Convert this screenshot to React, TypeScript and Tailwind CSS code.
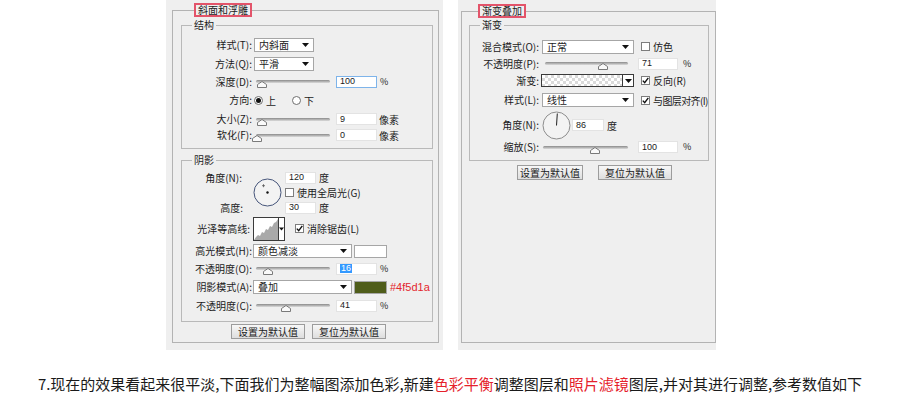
import React from 'react';

const Caret: React.FC<{ w?: number }> = ({ w = 7 }) => (
  <svg width={w} height={4} viewBox="0 0 7 4">
    <path d="M0 0h7L3.5 4z" fill="#111" />
  </svg>
);

const Select: React.FC<{ value: string; className: string }> = ({ value, className }) => (
  <div className={`flex h-[14px] items-center justify-between border border-[#a6a6a6] bg-white pl-[4px] pr-[4px] ${className}`}>
    <span className="leading-none">{value}</span>
    <Caret />
  </div>
);

const Field: React.FC<{ value: string; className?: string; focus?: boolean; picked?: boolean }> = ({
  value,
  className = 'w-[40px]',
  focus,
  picked,
}) => (
  <div
    className={`flex h-[12px] items-center bg-white pl-[3px] font-['Liberation_Sans',sans-serif] text-[9px] leading-none ${
      focus ? 'border border-[#7eb4ea]' : 'border border-[#e3e3e3]'
    } ${className}`}
  >
    {picked ? <span className="bg-[#3399ff] px-[1px] text-white">{value}</span> : value}
  </div>
);

const Slider: React.FC<{ className: string; at: number }> = ({ className, at }) => (
  <div className={`relative h-[3px] rounded-full bg-linear-to-b from-[#8a8a8a] to-[#dcdcdc] ${className}`}>
    <svg className="absolute top-[1px] -ml-[5px]" style={{ left: at }} width="10" height="7" viewBox="0 0 10 7">
      <path d="M.5 6.5V3.5L5 .5l4.5 3v3z" fill="#fafafa" stroke="#7a7a7a" />
    </svg>
  </div>
);

const Check: React.FC<{ on?: boolean }> = ({ on }) => (
  <span className="flex h-[9px] w-[9px] shrink-0 items-center justify-center border border-[#7d7d7d] bg-white">
    {on && (
      <svg width="7" height="7" viewBox="0 0 7 7">
        <path d="M.8 3.6l1.9 2.1L6.3.9" fill="none" stroke="#111" strokeWidth="1.4" />
      </svg>
    )}
  </span>
);

const Radio: React.FC<{ on?: boolean }> = ({ on }) => (
  <span className="flex h-[9px] w-[9px] items-center justify-center rounded-full border border-[#6f6f6f] bg-white">
    {on && <span className="h-[5px] w-[5px] rounded-full bg-[#111]" />}
  </span>
);

const Btn: React.FC<{ children: React.ReactNode; className: string }> = ({ children, className }) => (
  <div className={`flex h-[15px] items-center justify-center border border-[#9c9c9c] bg-linear-to-b from-[#f7f7f7] to-[#dedede] text-[10px] leading-none ${className}`}>
    {children}
  </div>
);

const Label: React.FC<{ children: React.ReactNode; className: string }> = ({ children, className }) => (
  <span className={`shrink-0 text-right leading-none ${className}`}>{children}</span>
);

const Title: React.FC<{ children: React.ReactNode; className: string }> = ({ children, className }) => (
  <legend className={`h-[14px] border-2 border-[#e3546a] px-[2px] text-[10px] leading-[10px] ${className}`}>{children}</legend>
);

const Group: React.FC<{ title: string; children: React.ReactNode; className: string }> = ({ title, children, className }) => (
  <fieldset className={`border border-[#b9b9b9] ${className}`}>
    <legend className="ml-[10px] px-[2px] text-[10px] leading-[12px]">{title}</legend>
    {children}
  </fieldset>
);

const BevelPanel = () => (
  <div className="h-[350px] w-[277px] shrink-0 bg-[#efefef] pl-[6px] pt-[3px]">
    <fieldset className="h-[340px] w-[267px] border border-[#b3b3b3] pl-[8px] pr-[5px]">
      <Title className="ml-[13px]">斜面和浮雕</Title>

      <Group title="结构" className="mt-[2px] pb-[6px] pt-[5px]">
        <div className="flex h-[18px] items-center">
          <Label className="w-[70px]">样式(T):</Label>
          <Select value="内斜面" className="ml-[2px] w-[60px]" />
        </div>
        <div className="flex h-[19px] items-center">
          <Label className="w-[70px]">方法(Q):</Label>
          <Select value="平滑" className="ml-[2px] w-[60px]" />
        </div>
        <div className="flex h-[17px] items-center">
          <Label className="w-[70px]">深度(D):</Label>
          <Slider className="ml-[4px] w-[74px]" at={6} />
          <Field value="100" focus className="ml-[6px] w-[41px]" />
          <span className="ml-[3px] text-[9px]">%</span>
        </div>
        <div className="flex h-[20px] items-center">
          <Label className="w-[70px]">方向:</Label>
          <span className="ml-[2px] flex items-center gap-[3px]">
            <Radio on />
            上
          </span>
          <span className="ml-[16px] flex items-center gap-[3px]">
            <Radio />
            下
          </span>
        </div>
        <div className="flex h-[18px] items-center">
          <Label className="w-[70px]">大小(Z):</Label>
          <Slider className="ml-[4px] w-[74px]" at={6} />
          <Field value="9" className="ml-[6px] w-[41px]" />
          <span className="ml-[2px]">像素</span>
        </div>
        <div className="flex h-[14px] items-center">
          <Label className="w-[70px]">软化(F):</Label>
          <Slider className="ml-[4px] w-[74px]" at={1} />
          <Field value="0" className="ml-[6px] w-[41px]" />
          <span className="ml-[2px]">像素</span>
        </div>
      </Group>

      <Group title="阴影" className="mt-[5px] pb-[7px] pt-[4px]">
        <div className="grid grid-cols-[60px_28px_auto] grid-rows-[15px_15px_15px] items-center">
          <Label className="w-[60px]">角度(N):</Label>
          <svg className="row-span-3 ml-[11px]" width="29" height="29" viewBox="0 0 29 29">
            <circle cx="14.5" cy="14.5" r="13.5" fill="#f3f3f3" stroke="#46557a" />
            <circle cx="14.5" cy="14.5" r="1.2" fill="#111" />
            <path d="M10.5 6.2v3M9 7.7h3" stroke="#555" strokeWidth="0.8" />
          </svg>
          <div className="ml-[15px] flex items-center">
            <Field value="120" className="w-[31px]" />
            <span className="ml-[3px]">度</span>
          </div>
          <span />
          <div className="ml-[15px] flex items-center gap-[3px] whitespace-nowrap">
            <Check />
            <span>使用全局光(G)</span>
          </div>
          <Label className="w-[61px]">高度:</Label>
          <div className="ml-[15px] flex items-center">
            <Field value="30" className="w-[31px]" />
            <span className="ml-[3px]">度</span>
          </div>
        </div>
        <div className="flex h-[27px] items-center">
          <Label className="w-[68px]">光泽等高线:</Label>
          <div className="ml-[3px] flex h-[24px] w-[32px] border border-[#3b3b3b] bg-white">
            <svg width="24" height="22" viewBox="0 0 24 22">
              <path d="M0 22L2 19 4 17 6 18 8 14 10 15 12 11 14 12 16 8 18 9 20 5 22 4 24 1V22Z" fill="#a9a9a9" />
            </svg>
            <div className="flex flex-1 items-center justify-center border-l border-[#3b3b3b]">
              <Caret w={5} />
            </div>
          </div>
          <span className="ml-[10px] flex items-center gap-[3px] whitespace-nowrap">
            <Check on />
            消除锯齿(L)
          </span>
        </div>
        <div className="flex h-[18px] items-center">
          <Label className="w-[70px]">高光模式(H):</Label>
          <Select value="颜色减淡" className="ml-[1px] w-[99px]" />
          <span className="ml-[2px] h-[13px] w-[33px] border border-[#a6a6a6] bg-white" />
        </div>
        <div className="flex h-[17px] items-center">
          <Label className="w-[70px]">不透明度(O):</Label>
          <Slider className="ml-[4px] w-[74px]" at={12} />
          <Field value="16" picked className="ml-[6px] w-[41px]" />
          <span className="ml-[3px] text-[9px]">%</span>
        </div>
        <div className="flex h-[20px] items-center">
          <Label className="w-[70px]">阴影模式(A):</Label>
          <Select value="叠加" className="ml-[1px] w-[99px]" />
          <span className="ml-[2px] h-[13px] w-[33px] border border-[#a6a6a6] bg-[#4f5d1a]" />
          <span className="ml-[3px] font-['Liberation_Sans',sans-serif] text-[11px] leading-none text-[#e3262e]">#4f5d1a</span>
        </div>
        <div className="flex h-[17px] items-center">
          <Label className="w-[70px]">不透明度(C):</Label>
          <Slider className="ml-[4px] w-[74px]" at={30} />
          <Field value="41" className="ml-[6px] w-[41px]" />
          <span className="ml-[3px] text-[9px]">%</span>
        </div>
      </Group>

      <div className="mt-[2px] flex justify-center gap-[7px] pl-[3px]">
        <Btn className="w-[74px]">设置为默认值</Btn>
        <Btn className="w-[74px]">复位为默认值</Btn>
      </div>
    </fieldset>
  </div>
);

const GradientPanel = () => (
  <div className="h-[350px] w-[258px] shrink-0 bg-[#efefef] pl-[3px] pt-[4px]">
    <fieldset className="h-[339px] w-[252px] border border-[#b3b3b3] pl-[7px] pr-[6px]">
      <Title className="ml-[9px]">渐变叠加</Title>

      <Group title="渐变" className="mt-[1px] pb-[6px] pt-[6px]">
        <div className="flex h-[19px] items-center">
          <Label className="w-[69px]">混合模式(O):</Label>
          <Select value="正常" className="ml-[3px] w-[92px]" />
          <span className="ml-[7px] flex items-center gap-[3px]">
            <Check />
            仿色
          </span>
        </div>
        <div className="flex h-[15px] items-center">
          <Label className="w-[69px]">不透明度(P):</Label>
          <Slider className="ml-[6px] w-[83px]" at={58} />
          <Field value="71" className="ml-[10px] w-[40px]" />
          <span className="ml-[5px] text-[9px]">%</span>
        </div>
        <div className="flex h-[19px] items-center">
          <Label className="w-[69px]">渐变:</Label>
          <div className="ml-[2px] flex h-[13px] w-[93px] border border-[#3a3a3a]">
            <div className="flex-1 [background-image:conic-gradient(#dadada_25%,#ffffff_0_50%,#dadada_0_75%,#ffffff_0)] [background-size:6px_6px]" />
            <div className="flex w-[11px] items-center justify-center border-l border-[#3a3a3a] bg-white">
              <Caret />
            </div>
          </div>
          <span className="ml-[7px] flex items-center gap-[3px] whitespace-nowrap">
            <Check on />
            反向(R)
          </span>
        </div>
        <div className="flex h-[20px] items-center">
          <Label className="w-[69px]">样式(L):</Label>
          <Select value="线性" className="ml-[3px] w-[92px]" />
          <span className="ml-[7px] flex items-center gap-[3px] whitespace-nowrap tracking-[-0.6px]">
            <Check on />
            与图层对齐(I)
          </span>
        </div>
        <div className="flex h-[30px] items-center">
          <Label className="w-[69px]">角度(N):</Label>
          <svg className="ml-[3px]" width="29" height="29" viewBox="0 0 29 29">
            <circle cx="14.5" cy="14.5" r="13.5" fill="#f3f3f3" stroke="#8d8d8d" />
            <path d="M14.5 14.5L15.3 2.5" stroke="#222" strokeWidth="1" />
          </svg>
          <Field value="86" className="ml-[1px] w-[32px]" />
          <span className="ml-[3px]">度</span>
        </div>
        <div className="flex h-[14px] items-center">
          <Label className="w-[69px]">缩放(S):</Label>
          <Slider className="ml-[4px] w-[85px]" at={52} />
          <Field value="100" className="ml-[10px] w-[40px]" />
          <span className="ml-[5px] text-[9px]">%</span>
        </div>
      </Group>

      <div className="mt-[4px] flex gap-[15px] pl-[48px]">
        <Btn className="w-[66px]">设置为默认值</Btn>
        <Btn className="w-[74px]">复位为默认值</Btn>
      </div>
    </fieldset>
  </div>
);

export default function App() {
  return (
    <div className="h-[395px] w-[900px] overflow-hidden bg-white font-['Noto_Sans_CJK_SC',sans-serif] text-[10px] text-[#1b1b1b]">
      <div className="flex gap-[15px] pl-[166px]">
        <BevelPanel />
        <GradientPanel />
      </div>
      <p className="mt-[26px] text-center text-[15px] leading-[16px] text-[#1a1a1a]">
        7.现在的效果看起来很平淡,下面我们为整幅图添加色彩,新建<span className="text-[#e5212b]">色彩平衡</span>调整图层和
        <span className="text-[#e5212b]">照片滤镜</span>图层,并对其进行调整,参考数值如下
      </p>
    </div>
  );
}
